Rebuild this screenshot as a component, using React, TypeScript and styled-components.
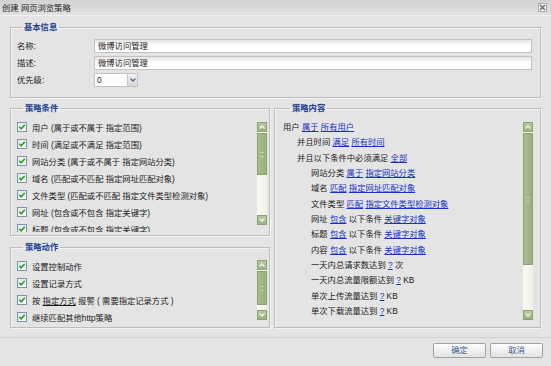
import React from "react";
import styled, { createGlobalStyle } from "styled-components";

const Global = createGlobalStyle`
  html, body { margin: 0; padding: 0; }
  body {
    background: #e4e4e4;
    font-family: "Liberation Sans", "Noto Sans CJK SC", sans-serif;
    font-size: 8.3px;
    color: #1a1a1a;
  }
`;

const Window = styled.div`
  width: 551px;
  height: 366px;
  display: flex;
  flex-direction: column;
  background: #e4e4e4;
  overflow: hidden;
`;

const TitleBar = styled.div`
  height: 16px;
  flex: none;
  box-sizing: border-box;
  display: flex;
  align-items: center;
  justify-content: space-between;
  padding: 0 4px 1px 2px;
  background: linear-gradient(#d3d3d3, #e1e1e1);
  border-bottom: 1px solid #f1f1f1;
  color: #222;
`;

const CloseButton = styled.div`
  width: 9px;
  height: 9px;
  box-sizing: border-box;
  border: 1px solid #a9a9a9;
  background: #f6f6f6;
  display: flex;
  align-items: center;
  justify-content: center;
`;

const Content = styled.div`
  padding: 6px 10px 0 10px;
  display: flex;
  flex-direction: column;
  gap: 5px;
`;

const Group = styled.fieldset<{ $h: number; $pt: number; $pl: number; $pr: number }>`
  margin: 0;
  min-width: 0;
  box-sizing: border-box;
  height: ${(p) => p.$h}px;
  padding: ${(p) => p.$pt}px ${(p) => p.$pr}px 0 ${(p) => p.$pl}px;
  border: 1px solid #bcbcbc;
  box-shadow: inset 1px 1px 0 #f4f4f4, 1px 1px 0 #f4f4f4;
`;

const Legend = styled.legend<{ $ml: number }>`
  margin-left: ${(p) => p.$ml}px;
  padding: 0 2px;
  line-height: 10px;
  font-weight: bold;
  color: #1e4090;
`;

const FormGrid = styled.div`
  display: grid;
  grid-template-columns: 77px 1fr;
  row-gap: 3px;
  align-items: center;
`;

const Label = styled.div`
  line-height: 14px;
`;

const TextBox = styled.div`
  height: 14px;
  box-sizing: border-box;
  border: 1px solid #c2c2c2;
  background: linear-gradient(#e4e4e4, #ffffff 45%);
  padding-left: 3px;
  line-height: 12px;
`;

const SelectBox = styled.div`
  width: 44px;
  height: 14px;
  box-sizing: border-box;
  border: 1px solid #c2c2c2;
  background: #fff;
  display: flex;
`;

const SelectValue = styled.div`
  flex: 1;
  padding-left: 2px;
  line-height: 12px;
`;

const SelectArrow = styled.div`
  width: 9px;
  background: linear-gradient(#f2f2f2, #d6d6d6);
  border-left: 1px solid #c8c8c8;
  display: flex;
  align-items: center;
  justify-content: center;
`;

const Columns = styled.div`
  display: flex;
  gap: 4px;
`;

const LeftColumn = styled.div`
  width: 260px;
  display: flex;
  flex-direction: column;
  gap: 6px;
`;

const RightColumn = styled.div`
  flex: 1;
  display: flex;
  flex-direction: column;
`;

const ListArea = styled.div<{ $h: number }>`
  height: ${(p) => p.$h}px;
  display: flex;
`;

const Items = styled.div`
  flex: 1;
  overflow: hidden;
`;

const CheckRow = styled.div`
  height: 17px;
  display: flex;
  align-items: center;
  gap: 5px;
  white-space: nowrap;
`;

const ContentRow = styled.div<{ $level: number }>`
  height: 15.33px;
  line-height: 15.33px;
  padding-left: ${(p) => p.$level * 14}px;
  white-space: nowrap;
`;

const Link = styled.span`
  color: #1732c4;
  text-decoration: underline;
`;

const Plain = styled.span`
  text-decoration: underline;
`;

const ScrollTrack = styled.div<{ $mt: number; $h: number }>`
  width: 10px;
  height: ${(p) => p.$h}px;
  margin-top: ${(p) => p.$mt}px;
  flex: none;
  display: flex;
  flex-direction: column;
  gap: 1px;
  background: #f5f8ef;
`;

const ScrollButton = styled.div`
  height: 10px;
  flex: none;
  box-sizing: border-box;
  border: 1px solid #8ea46f;
  background: linear-gradient(#b6c79d, #9db283);
  display: flex;
  align-items: center;
  justify-content: center;
`;

const Thumb = styled.div<{ $h: number }>`
  height: ${(p) => p.$h}px;
  flex: none;
  box-sizing: border-box;
  border: 1px solid #8da06f;
  background: linear-gradient(90deg, #a9bc8d, #9aaf7e);
  display: flex;
  align-items: center;
  justify-content: center;
`;

const Grip = styled.div`
  width: 4px;
  height: 5px;
  border-top: 1px solid #c2d0ad;
  border-bottom: 1px solid #c2d0ad;
  box-sizing: border-box;
`;

const TrackRest = styled.div`
  flex: 1;
  background: linear-gradient(90deg, #f8faf3, #eef3e6);
`;

const Footer = styled.div`
  margin-top: 9px;
  border-top: 1px solid #d2d2d2;
  padding: 5px 8px 0 0;
  display: flex;
  justify-content: flex-end;
  gap: 4px;
`;

const Button = styled.div`
  width: 53px;
  height: 15px;
  box-sizing: border-box;
  border: 1px solid #a2a2a2;
  border-radius: 2px;
  background: linear-gradient(#fefefe, #e2e2e2);
  color: #3a5c8c;
  text-align: center;
  line-height: 13px;
`;

const Chevron = ({ up, color }: { up?: boolean; color: string }) => (
  <svg width="6" height="4" viewBox="0 0 6 4">
    <path
      d={up ? "M0.5 3.5 L3 1 L5.5 3.5" : "M0.5 0.5 L3 3 L5.5 0.5"}
      fill="none"
      stroke={color}
      strokeWidth="1.3"
    />
  </svg>
);

const CheckIcon = () => (
  <svg width="10" height="10" viewBox="0 0 10 10" style={{ flex: "none" }}>
    <defs>
      <linearGradient id="cbg" x1="0" y1="0" x2="1" y2="1">
        <stop offset="0" stopColor="#e4e8ec" />
        <stop offset="1" stopColor="#ffffff" />
      </linearGradient>
    </defs>
    <rect x="0.5" y="0.5" width="9" height="9" fill="url(#cbg)" stroke="#7f93a8" />
    <path d="M2.3 4.8 L4.2 6.8 L7.8 2.8" fill="none" stroke="#21a021" strokeWidth="1.6" />
  </svg>
);

const Scrollbar = ({ mt, h, thumb }: { mt: number; h: number; thumb: number }) => (
  <ScrollTrack $mt={mt} $h={h}>
    <ScrollButton>
      <Chevron up color="#f2f6ea" />
    </ScrollButton>
    <Thumb $h={thumb}>
      <Grip />
    </Thumb>
    <TrackRest />
    <ScrollButton>
      <Chevron color="#f2f6ea" />
    </ScrollButton>
  </ScrollTrack>
);

const conditions = [
  "用户 (属于或不属于 指定范围)",
  "时间 (满足或不满足 指定范围)",
  "网站分类 (属于或不属于 指定网站分类)",
  "域名 (匹配或不匹配 指定网址匹配对象)",
  "文件类型 (匹配或不匹配 指定文件类型检测对象)",
  "网址 (包含或不包含 指定关键字)",
  "标题 (包含或不包含 指定关键字)",
];

export default function App() {
  return (
    <>
      <Global />
      <Window>
        <TitleBar>
          <span>创建 网页浏览策略</span>
          <CloseButton>
            <svg width="7" height="7" viewBox="0 0 7 7">
              <path d="M1 1 L6 6 M6 1 L1 6" stroke="#6e6e6e" strokeWidth="1.5" />
            </svg>
          </CloseButton>
        </TitleBar>
        <Content>
          <Group $h={76} $pt={7} $pl={6} $pr={8}>
            <Legend $ml={5}>基本信息</Legend>
            <FormGrid>
              <Label>名称:</Label>
              <TextBox>微博访问管理</TextBox>
              <Label>描述:</Label>
              <TextBox>微博访问管理</TextBox>
              <Label>优先级:</Label>
              <SelectBox>
                <SelectValue>0</SelectValue>
                <SelectArrow>
                  <Chevron color="#4a6a96" />
                </SelectArrow>
              </SelectBox>
            </FormGrid>
          </Group>
          <Columns>
            <LeftColumn>
              <Group $h={133} $pt={5} $pl={6} $pr={2}>
                <Legend $ml={6}>策略条件</Legend>
                <ListArea $h={114}>
                  <Items>
                    {conditions.map((c) => (
                      <CheckRow key={c}>
                        <CheckIcon />
                        <span>{c}</span>
                      </CheckRow>
                    ))}
                  </Items>
                  <Scrollbar mt={4} h={103} thumb={42} />
                </ListArea>
              </Group>
              <Group $h={86} $pt={5} $pl={6} $pr={2}>
                <Legend $ml={6}>策略动作</Legend>
                <ListArea $h={68}>
                  <Items>
                    <CheckRow>
                      <CheckIcon />
                      <span>设置控制动作</span>
                    </CheckRow>
                    <CheckRow>
                      <CheckIcon />
                      <span>设置记录方式</span>
                    </CheckRow>
                    <CheckRow>
                      <CheckIcon />
                      <span>
                        按 <Plain>指定方式</Plain> 报警 ( 需要指定记录方式 )
                      </span>
                    </CheckRow>
                    <CheckRow>
                      <CheckIcon />
                      <span>继续匹配其他http策略</span>
                    </CheckRow>
                  </Items>
                  <Scrollbar mt={3} h={60} thumb={34} />
                </ListArea>
              </Group>
            </LeftColumn>
            <RightColumn>
              <Group $h={225} $pt={7} $pl={8} $pr={7}>
                <Legend $ml={7}>策略内容</Legend>
                <ListArea $h={205}>
                  <Items>
                    <ContentRow $level={0}>
                      用户 <Link>属于</Link> <Link>所有用户</Link>
                    </ContentRow>
                    <ContentRow $level={1}>
                      并且时间 <Link>满足</Link> <Link>所有时间</Link>
                    </ContentRow>
                    <ContentRow $level={1}>
                      并且以下条件中必须满足 <Link>全部</Link>
                    </ContentRow>
                    <ContentRow $level={2}>
                      网站分类 <Link>属于</Link> <Link>指定网站分类</Link>
                    </ContentRow>
                    <ContentRow $level={2}>
                      域名 <Link>匹配</Link> <Link>指定网址匹配对象</Link>
                    </ContentRow>
                    <ContentRow $level={2}>
                      文件类型 <Link>匹配</Link> <Link>指定文件类型检测对象</Link>
                    </ContentRow>
                    <ContentRow $level={2}>
                      网址 <Link>包含</Link> 以下条件 <Link>关键字对象</Link>
                    </ContentRow>
                    <ContentRow $level={2}>
                      标题 <Link>包含</Link> 以下条件 <Link>关键字对象</Link>
                    </ContentRow>
                    <ContentRow $level={2}>
                      内容 <Link>包含</Link> 以下条件 <Link>关键字对象</Link>
                    </ContentRow>
                    <ContentRow $level={2}>
                      一天内总请求数达到 <Link>?</Link> 次
                    </ContentRow>
                    <ContentRow $level={2}>
                      一天内总流量限额达到 <Link>?</Link> KB
                    </ContentRow>
                    <ContentRow $level={2}>
                      单次上传流量达到 <Link>?</Link> KB
                    </ContentRow>
                    <ContentRow $level={2}>
                      单次下载流量达到 <Link>?</Link> KB
                    </ContentRow>
                  </Items>
                  <Scrollbar mt={2} h={198} thumb={132} />
                </ListArea>
              </Group>
            </RightColumn>
          </Columns>
        </Content>
        <Footer>
          <Button>确定</Button>
          <Button>取消</Button>
        </Footer>
      </Window>
    </>
  );
}
